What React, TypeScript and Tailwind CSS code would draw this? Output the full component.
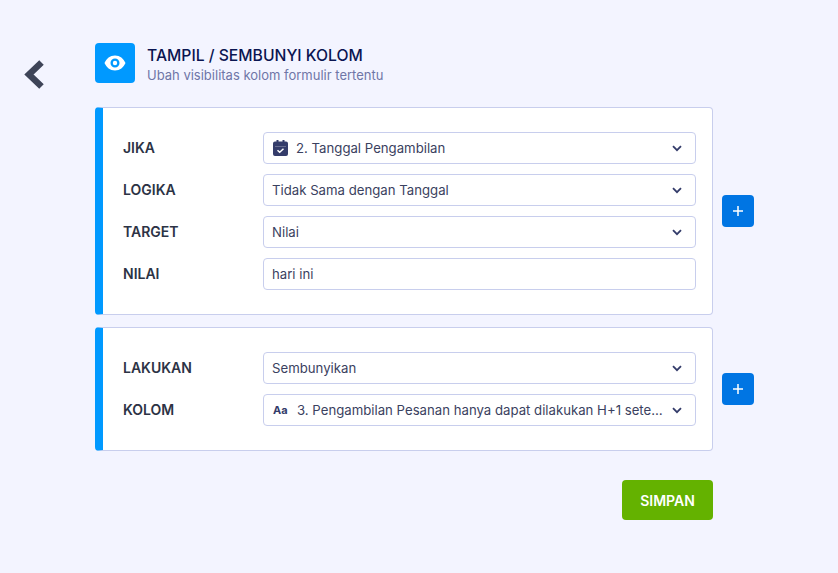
import React from "react";

const F = { fontFamily: "Inter, sans-serif" };

function Chevron() {
  return (
    <svg width="10" height="7" viewBox="0 0 10 7" className="shrink-0" fill="none">
      <path d="M1 1.2 5 5.2 9 1.2" stroke="#343c6a" strokeWidth="1.8" />
    </svg>
  );
}

function Field({ label, value, icon, select = true, gap }: { label: string; value: string; icon?: React.ReactNode; select?: boolean; gap?: boolean }) {
  return (
    <div className="flex items-center h-8">
      <div className="w-[140px] text-[14px] leading-[20px] pb-[1px] font-semibold text-[#2c3345]">{label}</div>
      <div className="flex-1 min-w-0 h-8 flex items-center border border-[#c8ceed] rounded bg-white pl-[8px] pr-[13px] text-[13.2px] text-[#3a4160]">
        {icon}
        <span className={`flex-1 truncate pt-[1px] ${gap ? "mr-[7px]" : ""}`}>{value}</span>
        {select && <Chevron />}
      </div>
    </div>
  );
}

function Plus() {
  return (
    <div className="w-8 h-8 rounded bg-[#0075e3] flex items-center justify-center ml-[9px]">
      <svg width="12" height="12" viewBox="0 0 12 12"><path d="M6 1v10M1 6h10" stroke="#fff" strokeWidth="1.5" /></svg>
    </div>
  );
}

function Card({ children, className }: { children: React.ReactNode; className: string }) {
  return (
    <div className={`w-[618px] bg-white border border-[#c8ceed] rounded border-l-[8px] border-l-[#0099ff] pl-5 pr-4 flex flex-col gap-[10px] justify-center ${className}`}>
      {children}
    </div>
  );
}

export default function App() {
  return (
    <div style={F} className="w-[838px] h-[573px] bg-[#f3f4ff] relative overflow-hidden pt-[43px] pl-[95px]">
      <svg className="absolute left-[23px] top-[59px]" width="22" height="31" viewBox="0 0 22 31" fill="none">
        <path d="M18.5 3.500 6 15.500l12.500 12" stroke="#3e4458" strokeWidth="6.500" />
      </svg>
      <div className="flex items-center gap-3 h-10">
        <div className="w-10 h-10 rounded bg-[#0099ff] flex items-center justify-center">
          <svg width="22" height="16" viewBox="0 0 22 16">
            <path fillRule="evenodd" fill="#fff" d="M11 .5C6 .5 2.500 3.500.5 8c2 4.500 5.500 7.500 10.500 7.500S19.500 12.500 21.500 8C19.500 3.500 16 .5 11 .5Zm0 3a4.500 4.500 0 1 1 0 9 4.500 4.500 0 0 1 0-9Z" />
            <circle cx="11" cy="8" r="2.200" fill="#fff" />
          </svg>
        </div>
        <div className="pt-1">
          <div className="text-[15.7px] leading-[20px] font-medium text-[#0a1551]">TAMPIL / SEMBUNYI KOLOM</div>
          <div className="text-[13px] leading-[18px] text-[#6f76a7]">Ubah visibilitas kolom formulir tertentu</div>
        </div>
      </div>
      <div className="flex items-center mt-6">
        <Card className="h-[208px]">
          <Field label="JIKA" value="2. Tanggal Pengambilan" icon={
            <svg width="15" height="16" viewBox="0 0 15 16" className="mr-[8px] ml-[1px] shrink-0">
              <path fill="#343c6a" fillRule="evenodd" d="M3.500 0h2v1.500h4V0h2v1.500H13A2 2 0 0 1 15 3.500V14a2 2 0 0 1-2 2H2a2 2 0 0 1-2-2V3.500a2 2 0 0 1 2-2h1.500V0ZM2 6.500V14h11V6.500H2Z" />
              <path d="M2 6.500h11V14H2Z" fill="#343c6a" />
              <path d="M4.500 10.200 6.700 12.200 10.500 8.700" stroke="#fff" strokeWidth="1.500" fill="none" />
            </svg>
          } />
          <Field label="LOGIKA" value="Tidak Sama dengan Tanggal" />
          <Field label="TARGET" value="Nilai" />
          <Field label="NILAI" value="hari ini" select={false} />
        </Card>
        <Plus />
      </div>
      <div className="flex items-center mt-3">
        <Card className="h-[124px]">
          <Field label="LAKUKAN" value="Sembunyikan" />
          <Field label="KOLOM" gap value="3. Pengambilan Pesanan hanya dapat dilakukan H+1 setelah pemesanan" icon={
            <span className="text-[11px] font-bold text-[#343c6a] mr-[10px] ml-[1px] w-[14px] shrink-0">Aa</span>
          } />
        </Card>
        <Plus />
      </div>
      <div className="w-[618px] flex justify-end mt-[29px]">
        <div className="w-[91px] h-10 rounded bg-[#64b200] text-white text-[14px] font-semibold flex items-center justify-center">SIMPAN</div>
      </div>
    </div>
  );
}
